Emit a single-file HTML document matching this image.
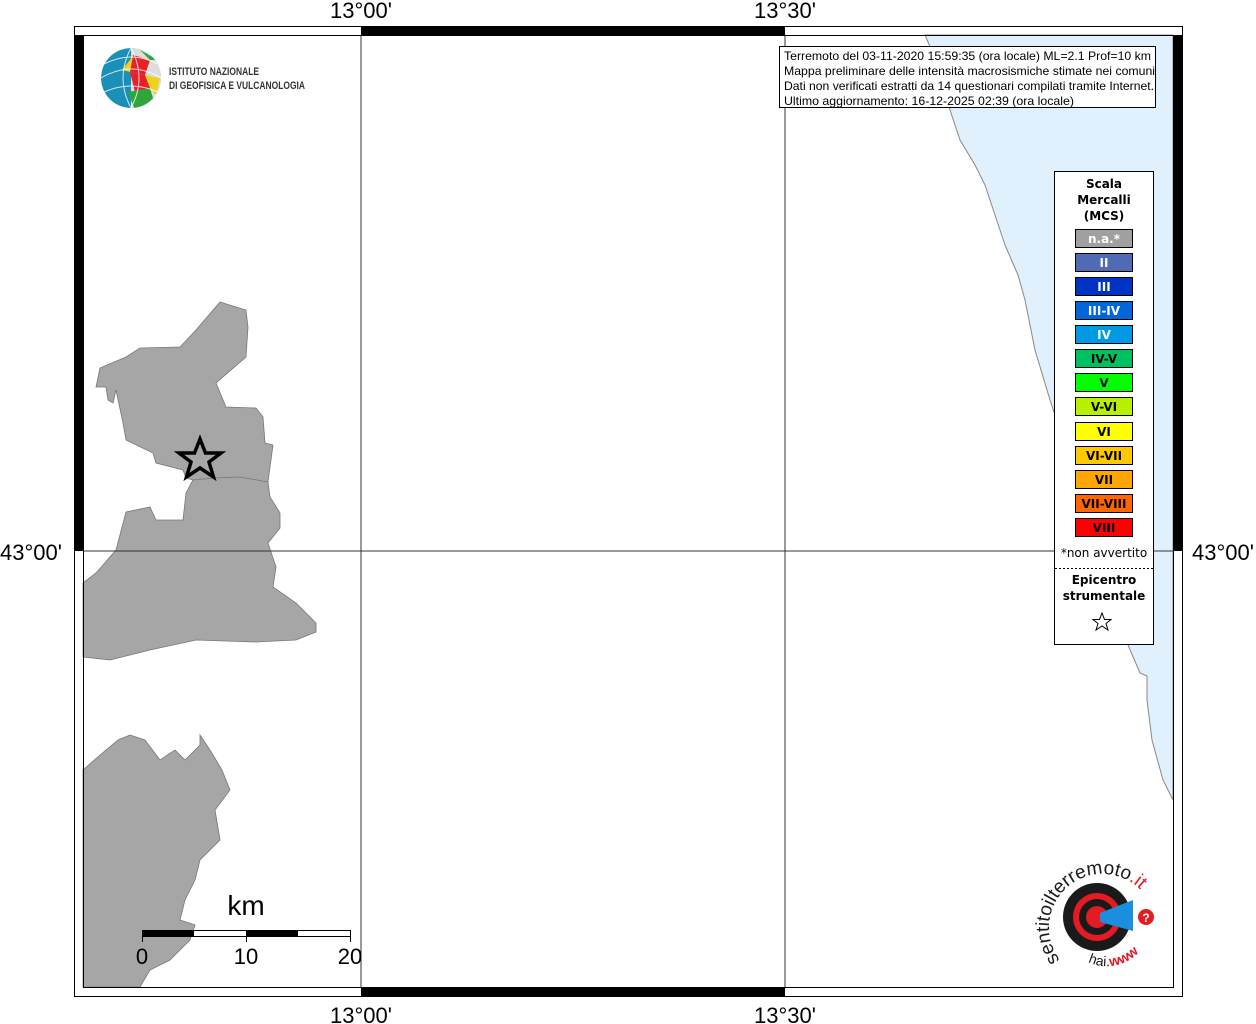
<!DOCTYPE html>
<html><head><meta charset="utf-8"><style>
html,body{margin:0;padding:0;background:#fff;}
svg{display:block;}
</style></head><body>
<svg width="1256" height="1024" viewBox="0 0 1256 1024" xmlns="http://www.w3.org/2000/svg" font-family="Liberation Sans, sans-serif">
<rect width="1256" height="1024" fill="#fff"/>
<path d="M925,35 L940,70 L950,110 L960,140 L975,165 L985,185 L995,215 L1005,245 L1018,275 L1025,300 L1035,350 L1050,400 L1070,460 L1090,530 L1110,590 L1128,645 L1140,673 L1147,676 L1147,700 L1152,740 L1163,780 L1173,800 L1173,35 Z" fill="#e0f1fd" stroke="#888" stroke-width="1"/>
<path d="M220,302 L246,310 L248,327 L246,357 L216,383 L226,407 L256,408 L263,417 L265,443 L273,445 L268,482 L270,497 L280,513 L280,528 L268,543 L276,567 L273,587 L296,603 L316,623 L316,632 L296,640 L256,642 L196,640 L150,650 L110,660 L83,657 L83,583 L96,573 L116,550 L126,512 L150,507 L156,520 L183,520 L186,493 L193,480 L186,478 L183,470 L156,463 L153,453 L126,440 L123,423 L116,390 L113,403 L108,400 L106,387 L96,387 L100,368 L126,357 L140,348 L180,347 L196,330 Z" fill="#a6a6a6" stroke="#777" stroke-width="0.8"/>
<path d="M193,480 L215,478 L240,477 L268,482" fill="none" stroke="#777" stroke-width="0.8"/>
<path d="M83,770 L100,755 L118,740 L130,735 L145,740 L160,760 L175,750 L185,760 L200,745 L200,735 L210,750 L222,770 L230,790 L215,810 L220,840 L200,860 L195,880 L185,900 L180,920 L195,925 L190,940 L170,960 L150,970 L140,987 L83,987 Z" fill="#a6a6a6" stroke="#777" stroke-width="0.8"/>
<line x1="361" y1="35" x2="361" y2="987" stroke="#333" stroke-width="1"/>
<line x1="785" y1="35" x2="785" y2="987" stroke="#333" stroke-width="1"/>
<line x1="83" y1="551" x2="1173" y2="551" stroke="#333" stroke-width="1"/>
<rect x="74.5" y="26.5" width="1108" height="970" fill="none" stroke="#000" stroke-width="1"/>
<rect x="83.5" y="35.5" width="1090" height="952" fill="none" stroke="#000" stroke-width="1"/>
<rect x="74" y="35" width="9" height="516" fill="#000"/>
<rect x="1173" y="35" width="9" height="516" fill="#000"/>
<rect x="361" y="26" width="424" height="9" fill="#000"/>
<rect x="361" y="987" width="424" height="9" fill="#000"/>
<g font-size="22" fill="#000">
<text x="361" y="18" text-anchor="middle">13°00'</text>
<text x="785" y="18" text-anchor="middle">13°30'</text>
<text x="361" y="1023" text-anchor="middle">13°00'</text>
<text x="785" y="1023" text-anchor="middle">13°30'</text>
<text x="0" y="560">43°00'</text>
<text x="1192" y="560">43°00'</text>
</g>
<defs><clipPath id="g"><circle cx="131" cy="78" r="30"/></clipPath></defs>
<g clip-path="url(#g)">
<circle cx="131" cy="78" r="30" fill="#1a8fb8"/>
<path d="M131,48 L170,48 L170,110 L131,110 Z" fill="#ddd"/>
<path d="M133,55 L150,60 L145,75 L130,72 Z" fill="#e8202a"/>
<path d="M130,72 L145,75 L150,88 L135,92 Z" fill="#e8202a"/>
<path d="M145,75 L160,78 L156,95 L150,88 Z" fill="#f1d21a"/>
<path d="M128,92 L150,88 L155,105 L135,110 Z" fill="#2fa63c"/>
<path d="M140,50 L158,60 L150,60 Z" fill="#2fa63c"/>
<path d="M130,60 L133,55 L130,72 L122,70 Z" fill="#f1d21a"/>
<path d="M101,78 Q131,60 161,78 M104,64 Q131,50 158,64 M104,92 Q131,80 158,92 M131,48 Q115,78 131,108 M131,48 Q147,78 131,108" fill="none" stroke="#fff" stroke-width="1" opacity="0.8"/>
</g>
<text x="169" y="75" font-size="11" fill="#333" font-weight="bold" textLength="90" lengthAdjust="spacingAndGlyphs">ISTITUTO NAZIONALE</text>
<text x="169" y="89" font-size="11" fill="#333" font-weight="bold" textLength="136" lengthAdjust="spacingAndGlyphs">DI GEOFISICA E VULCANOLOGIA</text>
<rect x="779.5" y="46.5" width="376" height="61" fill="#fff" stroke="#000" stroke-width="1"/>
<g font-size="12" fill="#000">
<text x="784" y="60" textLength="367" lengthAdjust="spacingAndGlyphs">Terremoto del 03-11-2020 15:59:35 (ora locale) ML=2.1 Prof=10 km</text>
<text x="784" y="75" textLength="371" lengthAdjust="spacingAndGlyphs">Mappa preliminare delle intensità macrosismiche stimate nei comuni</text>
<text x="784" y="90" textLength="370" lengthAdjust="spacingAndGlyphs">Dati non verificati estratti da 14 questionari compilati tramite Internet.</text>
<text x="784" y="105" textLength="290" lengthAdjust="spacingAndGlyphs">Ultimo aggiornamento: 16-12-2025 02:39 (ora locale)</text>
</g>
<rect x="1054.5" y="171.5" width="99" height="473" fill="#fff" stroke="#000" stroke-width="1"/>
<g font-family="DejaVu Sans, sans-serif" font-size="12" font-weight="bold" text-anchor="middle" fill="#000">
<text x="1104" y="188">Scala</text>
<text x="1104" y="204">Mercalli</text>
<text x="1104" y="220">(MCS)</text>
</g>
<g font-family="DejaVu Sans, sans-serif" font-size="12" font-weight="bold" text-anchor="middle">
<rect x="1075.5" y="229.5" width="57" height="18" fill="#a0a0a0" stroke="#000"/><text x="1104" y="243" fill="#fff">n.a.*</text>
<rect x="1075.5" y="253.5" width="57" height="18" fill="#4f6bb5" stroke="#000"/><text x="1104" y="267" fill="#fff">II</text>
<rect x="1075.5" y="277.5" width="57" height="18" fill="#0033c4" stroke="#000"/><text x="1104" y="291" fill="#fff">III</text>
<rect x="1075.5" y="301.5" width="57" height="18" fill="#0066d9" stroke="#000"/><text x="1104" y="315" fill="#fff">III-IV</text>
<rect x="1075.5" y="325.5" width="57" height="18" fill="#0099e6" stroke="#000"/><text x="1104" y="339" fill="#fff">IV</text>
<rect x="1075.5" y="349.5" width="57" height="18" fill="#00c060" stroke="#000"/><text x="1104" y="363" fill="#000">IV-V</text>
<rect x="1075.5" y="373.5" width="57" height="18" fill="#00ff00" stroke="#000"/><text x="1104" y="387" fill="#000">V</text>
<rect x="1075.5" y="397.5" width="57" height="18" fill="#b8f000" stroke="#000"/><text x="1104" y="411" fill="#000">V-VI</text>
<rect x="1075.5" y="422.5" width="57" height="18" fill="#ffff00" stroke="#000"/><text x="1104" y="436" fill="#000">VI</text>
<rect x="1075.5" y="446.5" width="57" height="18" fill="#ffc800" stroke="#000"/><text x="1104" y="460" fill="#000">VI-VII</text>
<rect x="1075.5" y="470.5" width="57" height="18" fill="#ffa500" stroke="#000"/><text x="1104" y="484" fill="#000">VII</text>
<rect x="1075.5" y="494.5" width="57" height="18" fill="#ff6600" stroke="#000"/><text x="1104" y="508" fill="#000">VII-VIII</text>
<rect x="1075.5" y="518.5" width="57" height="18" fill="#ff0000" stroke="#000"/><text x="1104" y="532" fill="#000">VIII</text>
</g>
<text font-family="DejaVu Sans, sans-serif" x="1104" y="557" font-size="12" text-anchor="middle">*non avvertito</text>
<line x1="1055" y1="568.5" x2="1153" y2="568.5" stroke="#000" stroke-dasharray="2,2"/>
<g font-family="DejaVu Sans, sans-serif" font-size="12" font-weight="bold" text-anchor="middle">
<text x="1104" y="584">Epicentro</text>
<text x="1104" y="600">strumentale</text>
</g>
<path d="M1102,613 L1104.5,619.5 L1111,619.5 L1106,623.5 L1108,630 L1102,626 L1096,630 L1098,623.5 L1093,619.5 L1099.5,619.5 Z" fill="#fff" stroke="#000" stroke-width="1"/>
<path d="M200,439 L205.5,453 L221,453 L209,462 L213.5,477 L200,468 L186.5,477 L191,462 L179,453 L194.5,453 Z" fill="#a6a6a6" stroke="#000" stroke-width="3.5"/>
<text x="246" y="915" font-size="28" text-anchor="middle">km</text>
<rect x="142.5" y="930.5" width="208" height="6" fill="#fff" stroke="#000" stroke-width="1"/>
<rect x="142" y="930" width="52" height="6" fill="#000"/>
<rect x="246" y="930" width="52" height="6" fill="#000"/>
<line x1="142.5" y1="930" x2="142.5" y2="942" stroke="#000"/>
<line x1="246.5" y1="930" x2="246.5" y2="942" stroke="#000"/>
<line x1="350.5" y1="930" x2="350.5" y2="942" stroke="#000"/>
<g font-size="22" text-anchor="middle"><text x="142" y="964">0</text><text x="246" y="964">10</text><text x="350" y="964">20</text></g>
<defs><path id="arc" d="M1060,960 A50,50 0 1,1 1145,895"/><path id="arc2" d="M1088,962 A44,44 0 0,0 1150,930"/></defs>
<circle cx="1097" cy="917" r="34" fill="#1a1a1a"/>
<circle cx="1097" cy="917" r="24" fill="#e31b23"/>
<circle cx="1097" cy="917" r="18" fill="#1a1a1a"/>
<circle cx="1097" cy="917" r="11" fill="#e31b23"/>
<path d="M1100,913 L1133,900 L1133,931 L1100,922 Z" fill="#1a8fe0"/>
<circle cx="1146" cy="917" r="8" fill="#e31b23"/><text x="1146" y="922" font-size="12" font-weight="bold" fill="#fff" text-anchor="middle">?</text>
<text font-size="19" fill="#1a1a1a"><textPath href="#arc">sentitoilterremoto<tspan fill="#e31b23">.it</tspan></textPath></text>
<text font-size="14" fill="#1a1a1a"><textPath href="#arc2">hai.<tspan fill="#e31b23" font-weight="bold">www</tspan></textPath></text>
</svg>
</body></html>
